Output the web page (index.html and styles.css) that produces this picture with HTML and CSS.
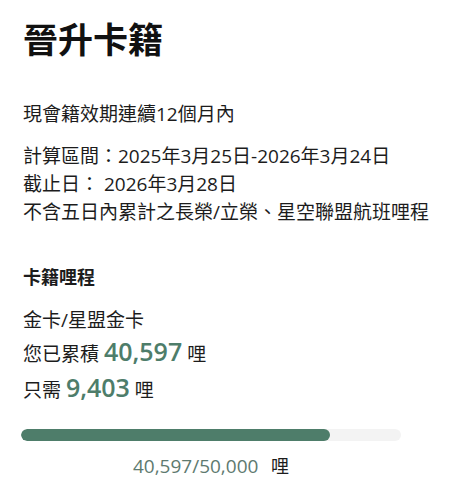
FILE: index.html
```html
<!DOCTYPE html>
<html lang="zh-Hant">
<head>
<meta charset="utf-8">
<link rel="stylesheet" href="styles.css">
</head>
<body>
<div class="page">
  <h1 class="title">晉升卡籍</h1>
  <p class="line first">現會籍效期連續12個月內</p>
  <div class="block">
    <p class="line">計算區間：2025年3月25日-2026年3月24日</p>
    <p class="line">截止日： 2026年3月28日</p>
    <p class="line">不含五日內累計之長榮/立榮、星空聯盟航班哩程</p>
  </div>
  <h2 class="subtitle">卡籍哩程</h2>
  <div class="miles">
    <p class="line">金卡/星盟金卡</p>
    <p class="line big">您已累積 <span class="num">40,597</span> 哩</p>
    <p class="line big last">只需 <span class="num">9,403</span> 哩</p>
  </div>
  <div class="bar"><div class="fill" style="width:81.2%"></div></div>
  <p class="total"><span class="tnum">40,597/50,000</span> 哩</p>
</div>
</body>
</html>
```
FILE: styles.css
```css
html, body {
  margin: 0;
  padding: 0;
  background: #ffffff;
}
body {
  font-family: "Open Sans", "Noto Sans CJK TC", sans-serif;
  color: #1c1c1c;
}
.page {
  padding: 18px 21px 0 23px;
  display: flex;
  flex-direction: column;
}
.title {
  margin: 0;
  font-family: "Noto Sans CJK TC", sans-serif;
  font-size: 35px;
  line-height: 40px;
  font-weight: 700;
  color: #111;
}
p { margin: 0; }
.line {
  font-size: 19px;
  line-height: 28px;
}
.first {
  margin-top: 42px;
}
.block {
  margin-top: 14px;
}
.subtitle {
  margin: 36px 0 0;
  font-family: "Noto Sans CJK TC", sans-serif;
  font-size: 18px;
  line-height: 28px;
  font-weight: 700;
}
.miles {
  margin-top: 16px;
  display: flex;
  flex-direction: column;
  gap: 2px;
}
.big { line-height: 30px; }
.last { margin-top: 1px; }
.num {
  font-family: "Open Sans", "Noto Sans", sans-serif;
  font-size: 25px;
  font-weight: 600;
  color: #4e7d6a;
}
.bar {
  margin-top: 24px;
  width: 380px;
  margin-left: -2px;
  height: 12px;
  border-radius: 6px;
  background: #f3f3f3;
  overflow: hidden;
}
.fill {
  height: 100%;
  background: #4e7d6a;
  border-radius: 6px;
}
.total {
  margin-top: 11px;
  width: 380px;
  margin-left: -2px;
  text-align: center;
  font-size: 18px;
  line-height: 28px;
}
.tnum {
  font-size: 19px;
  color: #5e7a70;
  margin-right: 8px;
}
```
